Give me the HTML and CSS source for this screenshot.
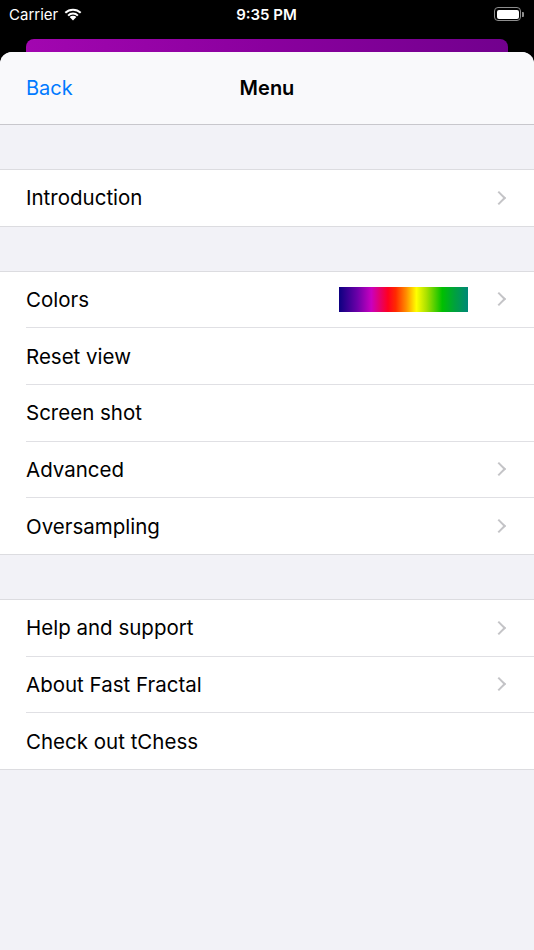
FILE: index.html
```html
<!DOCTYPE html>
<html lang="en">
<head>
    <meta charset="UTF-8">
    <meta name="viewport" content="width=device-width, initial-scale=1.0">
    <title>Menu</title>
    <link rel="stylesheet" href="styles.css">
</head>
<body>

    <div class="status-bar">
        <div class="carrier">
            Carrier
            <svg class="wifi" width="20" height="14" viewBox="0 0 20 14">
                <path d="M10 13.5 L6.6 10.1 A4.8 4.8 0 0 1 13.4 10.1 Z" fill="#fff"/>
                <path d="M4.4 7.9 A8 8 0 0 1 15.6 7.9 L14.2 9.3 A6 6 0 0 0 5.8 9.3 Z" fill="#fff"/>
                <path d="M1.6 5.1 A12 12 0 0 1 18.4 5.1 L17 6.5 A10 10 0 0 0 3 6.5 Z" fill="#fff"/>
            </svg>
        </div>
        <div class="time">9:35 PM</div>
        <div class="battery">
            <div class="battery-body"><div class="battery-fill"></div></div>
            <div class="battery-tip"></div>
        </div>
    </div>

    <div class="behind-card"></div>

    <div class="sheet">
        <div class="nav-bar">
            <a class="back">Back</a>
            <h1>Menu</h1>
        </div>

        <div class="group">
            <div class="row"><span>Introduction</span><span class="chevron"></span></div>
        </div>

        <div class="group">
            <div class="row">
                <span>Colors</span>
                <span class="row-right"><span class="swatch"></span><span class="chevron"></span></span>
            </div>
            <div class="row"><span>Reset view</span></div>
            <div class="row"><span>Screen shot</span></div>
            <div class="row"><span>Advanced</span><span class="chevron"></span></div>
            <div class="row"><span>Oversampling</span><span class="chevron"></span></div>
        </div>

        <div class="group">
            <div class="row"><span>Help and support</span><span class="chevron"></span></div>
            <div class="row"><span>About Fast Fractal</span><span class="chevron"></span></div>
            <div class="row"><span>Check out tChess</span></div>
        </div>
    </div>

</body>
</html>
```

FILE: styles.css
```css
body {
    margin: 0;
    padding: 0;
    background: #000;
    font-family: 'Inter', 'Liberation Sans', sans-serif;
    width: 534px;
    height: 950px;
    overflow: hidden;
}
.status-bar {
    height: 28px;
    padding: 0 10px 0 9px;
    display: flex;
    align-items: center;
    justify-content: space-between;
    color: #fff;
    font-size: 15px;
}
.carrier {
    display: flex;
    align-items: center;
    gap: 5px;
    width: 120px;
}
.time {
    font-weight: 600;
    font-size: 15px;
}
.battery {
    width: 120px;
    display: flex;
    justify-content: flex-end;
    align-items: center;
}
.battery-body {
    width: 22px;
    height: 9px;
    border: 1px solid #8e8e8e;
    border-radius: 4px;
    padding: 1.5px;
}
.battery-fill {
    width: 100%;
    height: 100%;
    background: #fff;
    border-radius: 2px;
}
.battery-tip {
    width: 2px;
    height: 5px;
    background: #8e8e8e;
    border-radius: 0 1px 1px 0;
    margin-left: 1px;
}
.behind-card {
    margin: 11px 26px 0;
    height: 20px;
    border-radius: 8px 8px 0 0;
    background: linear-gradient(90deg, #a206b0, #8a009e 50%, #72008e);
}
.sheet {
    margin-top: -7px;
    background: #f2f2f7;
    border-radius: 12px 12px 0 0;
    height: 898px;
    overflow: hidden;
}
.nav-bar {
    height: 72px;
    background: #f9f9fb;
    border-bottom: 1px solid #c8c7cc;
    display: flex;
    align-items: center;
    position: relative;
}
.back {
    color: #007aff;
    font-size: 20px;
    padding-left: 26px;
}
.nav-bar h1 {
    position: absolute;
    left: 0;
    right: 0;
    text-align: center;
    margin: 0;
    font-size: 20px;
    font-weight: 600;
    color: #000;
    pointer-events: none;
}
.group {
    margin-top: 44px;
    background: #fff;
    border-top: 1px solid #dcdce0;
    border-bottom: 1px solid #dcdce0;
}
.row {
    height: 55.67px;
    margin-left: 26px;
    padding-right: 27px;
    display: flex;
    align-items: center;
    justify-content: space-between;
    font-size: 20.5px;
    color: #000;
    border-bottom: 1px solid #e0e0e4;
}
.row:last-child {
    border-bottom: none;
}
.row-right {
    display: flex;
    align-items: center;
}
.swatch {
    width: 129px;
    height: 25px;
    margin-right: 26px;
    background: linear-gradient(90deg, #0c0080 0%, #6a00a8 14%, #c800c0 25%, #ff0020 38%, #ff2a00 44%, #ff8c00 52%, #ffff00 60%, #a8e000 68%, #00c000 80%, #00a040 90%, #008878 100%);
}
.chevron {
    width: 8px;
    height: 8px;
    border-top: 2px solid #c4c4c7;
    border-right: 2px solid #c4c4c7;
    transform: rotate(45deg);
    margin-right: 3px;
}
```
